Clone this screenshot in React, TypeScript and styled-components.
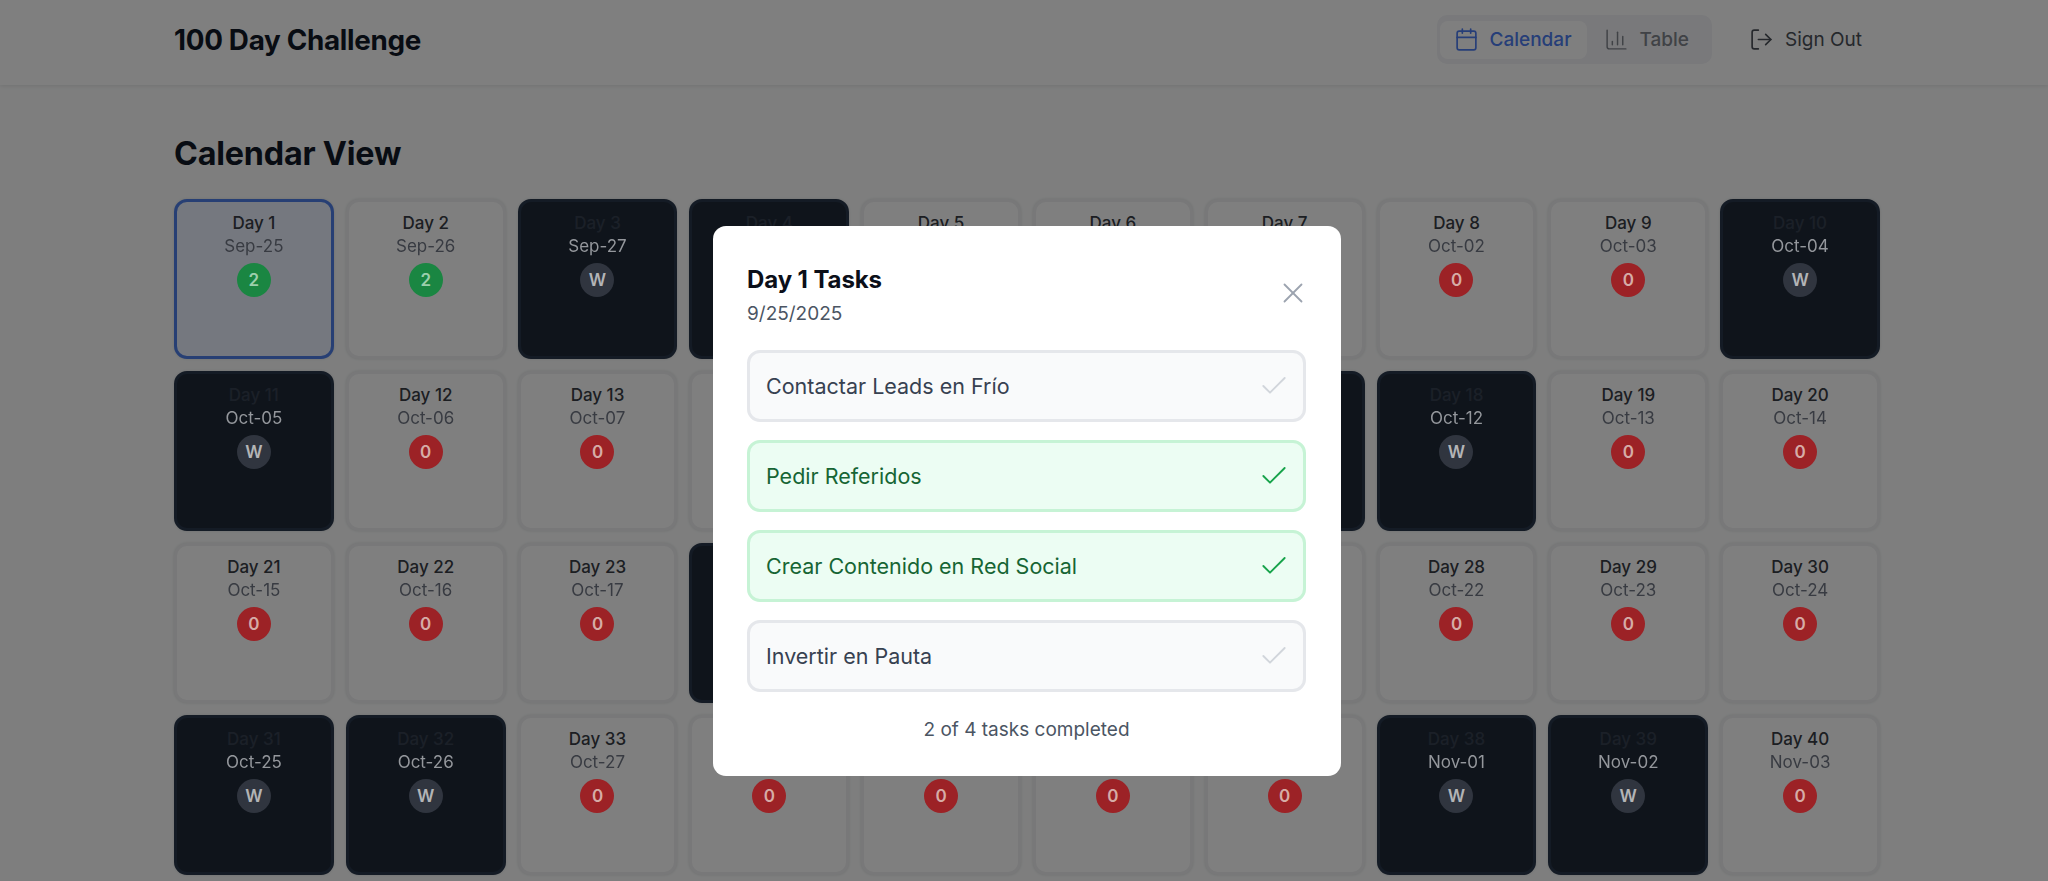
import React from "react";
import styled, { createGlobalStyle } from "styled-components";
import { BarChart3, Calendar, Check, LogOut, X } from "lucide-react";

const GlobalStyle = createGlobalStyle`
  html, body {
    margin: 0;
    height: 100%;
    overflow: hidden;
    background: #fcfdfd;
    font-family: Inter, "Noto Sans", sans-serif;
    color: #111827;
  }
  * {
    box-sizing: border-box;
  }
`;

const Header = styled.header`
  height: 85px;
  padding: 0 176px 6px 174px;
  display: flex;
  align-items: center;
  justify-content: space-between;
  background: #ffffff;
  box-shadow: 0 1px 4px rgba(0, 0, 0, 0.1);
`;

const Brand = styled.h1`
  margin: 0;
  font-size: 27.8px;
  font-weight: 700;
  letter-spacing: -0.3px;
`;

const HeaderActions = styled.div`
  display: flex;
  align-items: center;
  gap: 21px;
`;

const NavGroup = styled.nav`
  display: flex;
  align-items: center;
  height: 49px;
  padding: 0 3px;
  border-radius: 10px;
  background: #f2f3f6;
`;

const NavButton = styled.button<{ $active?: boolean }>`
  display: flex;
  align-items: center;
  gap: 11px;
  height: 38px;
  padding: ${(p) => (p.$active ? "0 15px 0 14px" : "0 20px 0 17px")};
  border: 0;
  border-radius: 8px;
  font: 500 19px Inter, sans-serif;
  color: ${(p) => (p.$active ? "#4c7cf0" : "#80848c")};
  background: ${(p) => (p.$active ? "#ffffff" : "transparent")};
`;

const SignOut = styled.button`
  display: flex;
  align-items: center;
  gap: 11px;
  height: 38px;
  padding: 0 10px 0 16px;
  border: 0;
  font: 400 19px Inter, sans-serif;
  color: #4b5058;
  background: transparent;
`;

const Main = styled.main`
  padding: 0 168px 0 174px;
`;

const Heading = styled.h2`
  margin: 48px 0 24px;
  height: 42px;
  font-size: 32.3px;
  line-height: 42px;
  font-weight: 700;
  letter-spacing: -0.2px;
`;

const CalendarGrid = styled.div`
  display: grid;
  grid-template-columns: repeat(10, 1fr);
  gap: 12px;
`;

const DayCard = styled.div<{ $weekend: boolean; $selected: boolean }>`
  height: 160px;
  padding-top: 10px;
  display: flex;
  flex-direction: column;
  align-items: center;
  border: 3px solid
    ${(p) => (p.$selected ? "#4f7fe8" : p.$weekend ? "#28364a" : "#f0f1f2")};
  border-radius: 13px;
  background: ${(p) =>
    p.$selected ? "#eaf1ff" : p.$weekend ? "#1f2937" : "#ffffff"};
  box-shadow: 0 0 3px rgba(0, 0, 0, 0.12);
`;

const DayLabel = styled.div<{ $weekend: boolean }>`
  height: 23px;
  font-size: 17px;
  line-height: 23px;
  font-weight: 500;
  color: ${(p) => (p.$weekend ? "#374151" : "#383c45")};
`;

const DateLabel = styled.div<{ $weekend: boolean }>`
  position: relative;
  z-index: 2;
  height: 22px;
  font-size: 17px;
  line-height: 22px;
  color: ${(p) => (p.$weekend ? "#94979c" : "#383b42")};
`;

const Badge = styled.div<{ $tone: "done" | "none" | "rest" }>`
  position: relative;
  z-index: 2;
  width: 34px;
  height: 34px;
  margin-top: 6px;
  display: flex;
  align-items: center;
  justify-content: center;
  border-radius: 50%;
  font-size: 17px;
  font-weight: 600;
  color: ${(p) => (p.$tone === "done" ? "#9ccfac" : p.$tone === "none" ? "#d6aca7" : "#b3b4b6")};
  background: ${(p) =>
    p.$tone === "done" ? "#1a8642" : p.$tone === "none" ? "#9c2226" : "#30353f"};
`;

const Overlay = styled.div`
  position: fixed;
  inset: 0;
  z-index: 1;
  background: rgba(0, 0, 0, 0.5);
`;

const ModalLayer = styled.div`
  position: fixed;
  inset: 0;
  z-index: 3;
  padding: 226px 0 0 713px;
`;

const Modal = styled.section`
  width: 628px;
  height: 550px;
  padding: 34px 35px 0 34px;
  border-radius: 13px;
  background: #ffffff;
`;

const ModalHeader = styled.div`
  height: 90px;
  display: flex;
  justify-content: space-between;
  align-items: flex-start;
`;

const TitleBlock = styled.div`
  padding-top: 4px;
`;

const ModalTitle = styled.h3`
  margin: 0 0 4px;
  font-size: 24px;
  line-height: 32px;
  font-weight: 700;
  letter-spacing: -0.1px;
  color: #0b0f19;
`;

const ModalDate = styled.div`
  font-size: 19px;
  line-height: 27px;
  color: #4b5563;
`;

const CloseButton = styled.button`
  display: flex;
  margin: 16px -4px 0 0;
  padding: 0;
  border: 0;
  color: #9ca3af;
  background: transparent;
`;

const TaskList = styled.div`
  display: flex;
  flex-direction: column;
  gap: 18px;
`;

const TaskRow = styled.div<{ $done: boolean }>`
  height: 72px;
  padding: 0 13px 0 16px;
  display: flex;
  align-items: center;
  justify-content: space-between;
  border: 3px solid ${(p) => (p.$done ? "#c6f3d5" : "#e5e7eb")};
  border-radius: 13px;
  font-size: 21.5px;
  color: ${(p) => (p.$done ? "#166534" : "#374151")};
  background: ${(p) => (p.$done ? "#ecfdf3" : "#f9fafb")};
`;

const Progress = styled.p`
  margin: 25px 0 0;
  text-align: center;
  font-size: 19px;
  line-height: 26px;
  color: #4b5563;
`;

const tasks = [
  { name: "Contactar Leads en Frío", done: false },
  { name: "Pedir Referidos", done: true },
  { name: "Crear Contenido en Red Social", done: true },
  { name: "Invertir en Pauta", done: false },
];

const START = Date.UTC(2025, 8, 25);

const days = Array.from({ length: 40 }, (_, i) => {
  const d = new Date(START + i * 86400000);
  const month = d.toLocaleString("en-US", { month: "short", timeZone: "UTC" });
  const weekday = d.getUTCDay();
  return {
    n: i + 1,
    date: `${month}-${String(d.getUTCDate()).padStart(2, "0")}`,
    weekend: weekday === 0 || weekday === 6,
    count: i < 2 ? 2 : 0,
  };
});

export default function App() {
  return (
    <>
      <GlobalStyle />
      <Header>
        <Brand>100 Day Challenge</Brand>
        <HeaderActions>
          <NavGroup>
            <NavButton $active>
              <Calendar size={25} strokeWidth={1.6} />
              Calendar
            </NavButton>
            <NavButton>
              <BarChart3 size={25} strokeWidth={1.4} />
              Table
            </NavButton>
          </NavGroup>
          <SignOut>
            <LogOut size={25} strokeWidth={1.6} />
            Sign Out
          </SignOut>
        </HeaderActions>
      </Header>
      <Main>
        <Heading>Calendar View</Heading>
        <CalendarGrid>
          {days.map((day) => (
            <DayCard key={day.n} $weekend={day.weekend} $selected={day.n === 1}>
              <DayLabel $weekend={day.weekend}>Day {day.n}</DayLabel>
              <DateLabel $weekend={day.weekend}>{day.date}</DateLabel>
              <Badge $tone={day.weekend ? "rest" : day.count > 0 ? "done" : "none"}>
                {day.weekend ? "W" : day.count}
              </Badge>
            </DayCard>
          ))}
        </CalendarGrid>
      </Main>
      <Overlay />
      <ModalLayer>
        <Modal>
          <ModalHeader>
            <TitleBlock>
              <ModalTitle>Day 1 Tasks</ModalTitle>
              <ModalDate>9/25/2025</ModalDate>
            </TitleBlock>
            <CloseButton>
              <X size={34} strokeWidth={1.3} />
            </CloseButton>
          </ModalHeader>
          <TaskList>
            {tasks.map((task) => (
              <TaskRow key={task.name} $done={task.done}>
                {task.name}
                <Check
                  size={32}
                  strokeWidth={1.4}
                  color={task.done ? "#16a34a" : "#d1d5db"}
                />
              </TaskRow>
            ))}
          </TaskList>
          <Progress>2 of 4 tasks completed</Progress>
        </Modal>
      </ModalLayer>
    </>
  );
}
